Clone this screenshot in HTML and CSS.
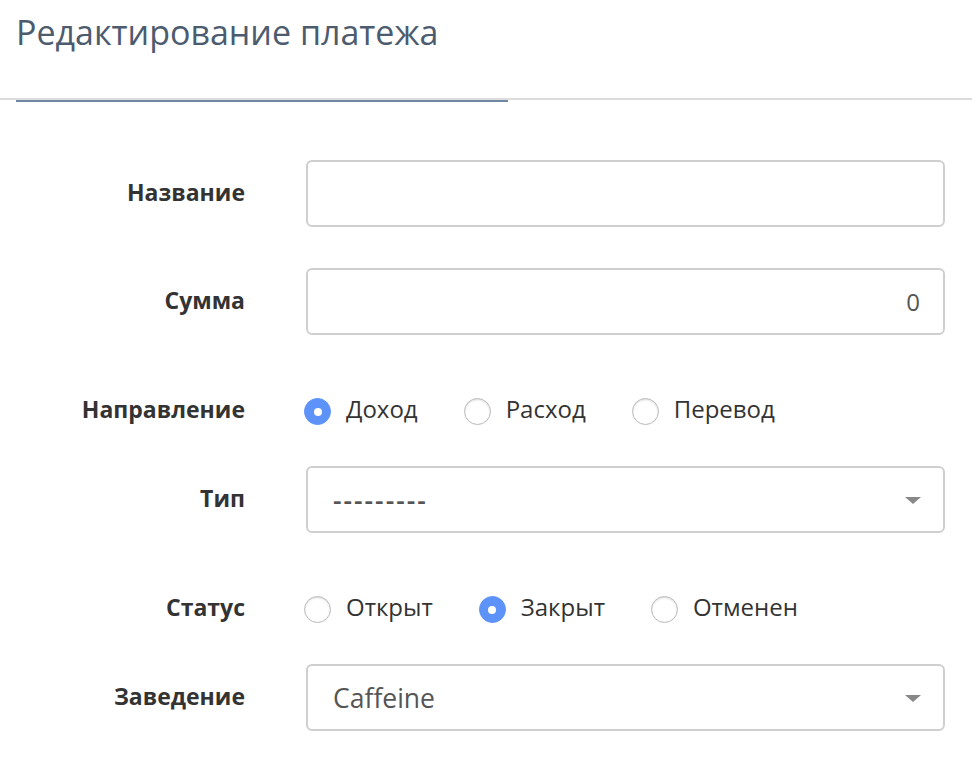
FILE: index.html
```html
<!DOCTYPE html>
<html lang="ru">
<head>
<meta charset="utf-8">
<title>Редактирование платежа</title>
<link rel="stylesheet" href="styles.css">
</head>
<body>
<header class="header">
  <h1 class="title">Редактирование платежа</h1>
</header>
<div class="tab-underline"></div>
<form class="form">
  <div class="row row-input">
    <label class="label">Название</label>
    <div class="control"><div class="input"></div></div>
  </div>
  <div class="row row-input">
    <label class="label">Сумма</label>
    <div class="control"><div class="input input-right">0</div></div>
  </div>
  <div class="row row-radio">
    <label class="label">Направление</label>
    <div class="control radios">
      <span class="option"><span class="radio checked"></span><span class="opt-text">Доход</span></span>
      <span class="option"><span class="radio"></span><span class="opt-text">Расход</span></span>
      <span class="option"><span class="radio"></span><span class="opt-text">Перевод</span></span>
    </div>
  </div>
  <div class="row row-input row-after-radio">
    <label class="label">Тип</label>
    <div class="control"><div class="input select"><span class="empty">---------</span><span class="caret"></span></div></div>
  </div>
  <div class="row row-radio">
    <label class="label">Статус</label>
    <div class="control radios">
      <span class="option"><span class="radio"></span><span class="opt-text">Открыт</span></span>
      <span class="option"><span class="radio checked"></span><span class="opt-text">Закрыт</span></span>
      <span class="option"><span class="radio"></span><span class="opt-text">Отменен</span></span>
    </div>
  </div>
  <div class="row row-input row-after-radio">
    <label class="label">Заведение</label>
    <div class="control"><div class="input select">Caffeine<span class="caret"></span></div></div>
  </div>
</form>
</body>
</html>
```

FILE: styles.css
```css
* { box-sizing: border-box; }
html, body { margin: 0; padding: 0; background: #fff; }
body {
  font-family: "Open Sans", "DejaVu Sans", sans-serif;
  color: #333;
  width: 972px;
}
.header {
  height: 100px;
  border-bottom: 2px solid #dcdcdc;
  padding: 8px 16px 0;
}
.title {
  margin: 0;
  font-size: 34px;
  font-weight: 400;
  color: #4c5b6e;
  line-height: 48px;
}
.tab-underline {
  margin-left: 16px;
  width: 492px;
  height: 2px;
  background: #6f87a3;
}
.form {
  padding-top: 58px;
  padding-right: 27px;
}
.row {
  display: flex;
  align-items: center;
}
.row-input { height: 67px; margin-top: 41px; }
.row-input:first-child { margin-top: 0; }
.row-radio { height: 40px; margin-top: 55px; }
.row-after-radio { margin-top: 36px; }
.label {
  width: 245px;
  text-align: right;
  font-weight: 700;
  font-size: 23px;
  color: #333;
  flex: none;
  margin-top: -3px;
}
.control {
  margin-left: 61px;
  flex: 1;
  height: 100%;
}
.input {
  height: 67px;
  border: 2px solid #cfcfcf;
  border-radius: 6px;
  display: flex;
  align-items: center;
  padding: 0 23px 0 25px;
  font-size: 24px;
  color: #555;
  position: relative;
}
.select { font-size: 26.5px; }
.empty { letter-spacing: 2px; font-weight: 600; }
.input-right { justify-content: flex-end; }
.caret {
  position: absolute;
  right: 22px;
  top: 29px;
  width: 0;
  height: 0;
  border-left: 8px solid transparent;
  border-right: 8px solid transparent;
  border-top: 7px solid #888;
}
.radios {
  display: flex;
  align-items: center;
  gap: 46px;
  margin-left: 59px;
}
.option {
  display: flex;
  align-items: center;
  gap: 15px;
}
.radio {
  width: 27px;
  height: 27px;
  border-radius: 50%;
  background: #fff;
  border: 1px solid #b9b9b9;
  box-shadow: inset 0 1px 2px rgba(0,0,0,0.15);
  margin-top: 3px;
  flex: none;
  display: flex;
  align-items: center;
  justify-content: center;
}
.radio.checked {
  background: #5d93f8;
  border-color: #5d93f8;
  box-shadow: none;
}
.radio.checked::after {
  content: "";
  width: 8px;
  height: 8px;
  border-radius: 50%;
  background: #fff;
}
.opt-text {
  font-size: 24px;
  color: #333;
  margin-top: -3px;
}
```
